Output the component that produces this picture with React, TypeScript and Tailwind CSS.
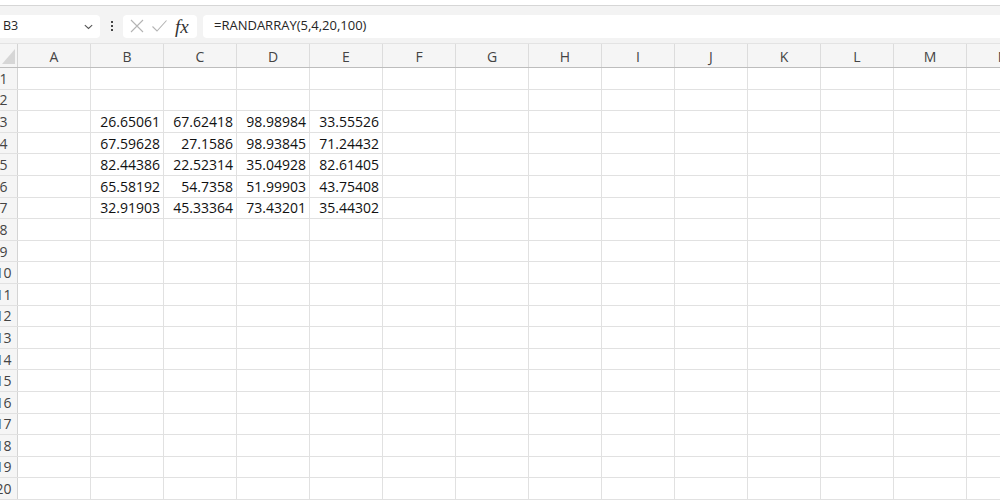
import React from "react";

const COLS = ["A", "B", "C", "D", "E", "F", "G", "H", "I", "J", "K", "L", "M", "N"];

// spill range from =RANDARRAY(5,4,20,100), starts at B3
const DATA: string[][] = [
  ["26.65061", "67.62418", "98.98984", "33.55526"],
  ["67.59628", "27.1586", "98.93845", "71.24432"],
  ["82.44386", "22.52314", "35.04928", "82.61405"],
  ["65.58192", "54.7358", "51.99903", "43.75408"],
  ["32.91903", "45.33364", "73.43201", "35.44302"],
];

const ui = { fontFamily: '"Open Sans", "Noto Sans", sans-serif' };
const cellFont = { fontFamily: '"Open Sans", "Liberation Sans", sans-serif' };

function cellValue(row: number, col: number): string {
  const r = row - 3;
  const c = col - 1;
  if (r < 0 || r >= DATA.length || c < 0 || c >= 4) return "";
  return DATA[r]![c]!;
}

function FormulaBar() {
  return (
    <div className="flex h-[37px] items-center bg-[#f3f3f3] pt-[3px]" style={ui}>
      <div className="flex h-[23px] w-[100px] items-center justify-between rounded-r-[4px] bg-white pl-[3px] pr-[6px] text-[12.5px] text-[#262626]">
        <span>B3</span>
        <svg width="11" height="11" viewBox="0 0 12 12" fill="none" stroke="#555" strokeWidth="1.2">
          <path d="M2 4.5 6 8.2 10 4.5" />
        </svg>
      </div>
      <div className="flex w-[23px] flex-col items-center justify-center gap-[2px]">
        <span className="h-[2px] w-[2px] bg-[#444]" />
        <span className="h-[2px] w-[2px] bg-[#444]" />
        <span className="h-[2px] w-[2px] bg-[#444]" />
      </div>
      <div className="flex h-[23px] w-[74px] items-center rounded-[4px] bg-white pl-[6px]">
        <svg width="16" height="16" viewBox="0 0 16 16" fill="none" stroke="#b4b4b4" strokeWidth="1.1">
          <path d="M2 2 14 14M14 2 2 14" />
        </svg>
        <svg className="ml-[6px]" width="17" height="16" viewBox="0 0 17 16" fill="none" stroke="#b4b4b4" strokeWidth="1.1">
          <path d="M1.5 8.5 6 13 15.5 2.5" />
        </svg>
        <span
          className="ml-[7px] text-[19px] italic leading-none text-[#333]"
          style={{ fontFamily: '"Liberation Serif", "DejaVu Serif", serif' }}
        >
          fx
        </span>
      </div>
      <div className="ml-[6px] flex h-[23px] flex-1 items-center rounded-l-[4px] bg-white pl-[11px] text-[13px] text-[#262626]">
        =RANDARRAY(5,4,20,100)
      </div>
    </div>
  );
}

function ColumnHeader() {
  return (
    <div className="flex h-[24px] border-t border-[#e3e3e3] bg-[#f5f5f5]" style={ui}>
      <div className="relative w-[18px] shrink-0 border-r border-[#d4d4d4]">
        <svg className="absolute bottom-[3px] right-[2px]" width="13" height="15" viewBox="0 0 13 15">
          <polygon points="13,0 13,15 0,15" fill="#d6d6d6" />
        </svg>
      </div>
      {COLS.map((c) => (
        <div
          key={c}
          className="flex w-[73px] shrink-0 items-center justify-center border-r border-[#dcdcdc] pt-[1px] text-[14px] text-[#444]"
        >
          {c}
        </div>
      ))}
    </div>
  );
}

function Row({ n }: { n: number }) {
  return (
    <div className="flex h-[21.6px] border-b border-[#e1e1e1]">
      {/* row header is scrolled partly off the left edge */}
      <div
        className="-ml-[10px] flex w-[28px] shrink-0 items-center justify-center border-r border-[#d4d4d4] bg-[#f5f5f5] text-[14px] text-[#444]"
        style={ui}
      >
        {n}
      </div>
      {COLS.map((c, i) => (
        <div
          key={c}
          className="flex w-[73px] shrink-0 items-center justify-end border-r border-[#e1e1e1] pr-[3px] text-[14px] text-[#111]"
          style={cellFont}
        >
          {cellValue(n, i)}
        </div>
      ))}
    </div>
  );
}

export default function App() {
  const rows = Array.from({ length: 21 }, (_, i) => i + 1);
  return (
    <div className="h-[500px] w-[1000px] overflow-hidden bg-white">
      {/* tail end of the ribbon */}
      <div className="h-[6px] border-b border-[#d6d6d6] bg-white shadow-[0_1px_2px_rgba(0,0,0,0.08)]" />
      <FormulaBar />
      <ColumnHeader />
      <div className="overflow-hidden border-t border-[#bdbdbd]">
        {rows.map((n) => (
          <Row key={n} n={n} />
        ))}
      </div>
    </div>
  );
}
